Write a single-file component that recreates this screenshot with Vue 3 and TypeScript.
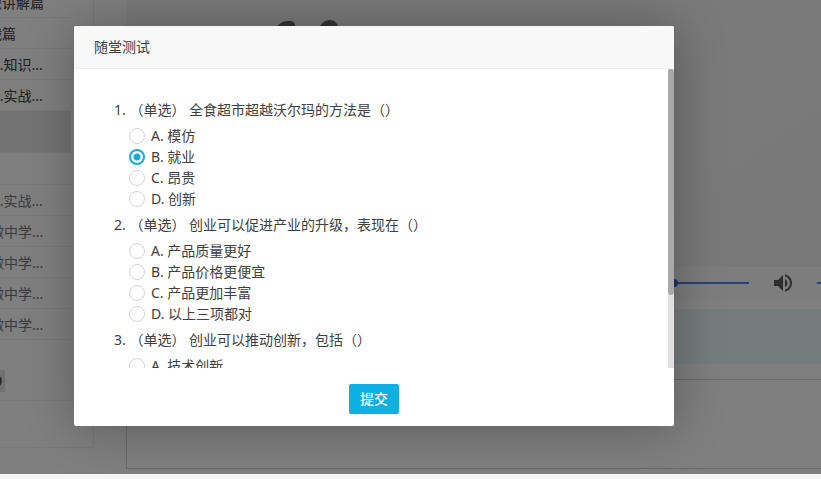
<script setup lang="ts">
import { computed, onMounted, ref } from 'vue'

interface Question {
  title: string
  options: string[]
  answer: string
}

interface Lesson {
  text: string
  kind?: 'active' | 'blank' | 'muted'
}

const lessons: Lesson[] = [
  { text: '知识讲解篇' },
  { text: '实战篇' },
  { text: '第 1.知识...' },
  { text: '第 1.实战...' },
  { text: '', kind: 'active' },
  { text: '', kind: 'blank' },
  { text: '第 2.实战...', kind: 'muted' },
  { text: '11做中学...', kind: 'muted' },
  { text: '12做中学...', kind: 'muted' },
  { text: '13做中学...', kind: 'muted' },
  { text: '14做中学...', kind: 'muted' },
]

const questions = ref<Question[]>([
  { title: '全食超市超越沃尔玛的方法是（）', options: ['模仿', '就业', '昂贵', '创新'], answer: 'B' },
  {
    title: '创业可以促进产业的升级，表现在（）',
    options: ['产品质量更好', '产品价格更便宜', '产品更加丰富', '以上三项都对'],
    answer: '',
  },
  {
    title: '创业可以推动创新，包括（）',
    options: ['技术创新', '产品创新', '管理创新', '以上三项都对'],
    answer: '',
  },
])

const progress = ref(88)
const volume = ref(100)
const letter = (i: number): string => 'ABCD'[i]

const scroller = ref<HTMLElement | null>(null)
const shown = ref(1)
const offset = ref(0)

function measure(): void {
  const el = scroller.value
  if (!el) return
  shown.value = el.clientHeight / el.scrollHeight
  offset.value = el.scrollTop / el.scrollHeight
}

const thumb = computed(() => ({
  height: `${shown.value * 100}%`,
  marginTop: `${offset.value * (scroller.value?.clientHeight ?? 0)}px`,
}))

onMounted(measure)
</script>

<template>
  <div class="page">
    <aside class="sidebar">
      <ul class="lessons">
        <li v-for="(l, i) in lessons" :key="i" :class="['lesson', l.kind]">{{ l.text }}</li>
      </ul>
      <div class="tools"><span class="badge"></span></div>
    </aside>
    <main class="main">
      <div class="video">
        <svg class="figures" width="80" height="40" viewBox="0 0 80 40" aria-hidden="true">
          <path d="M9 13C12 4 17 1 23 1c4 0 6 0 7 4v14H9z" />
          <path d="M53 10C56 3 60 0 65 0s8 4 9 10v12H53z" />
        </svg>
      </div>
      <div class="controls">
        <input v-model="progress" class="slider seek" type="range" min="0" max="100" aria-label="播放进度" />
        <button class="mute" type="button" aria-label="音量">
          <svg width="24" height="24" viewBox="0 0 24 24">
            <path
              d="M3 9v6h4l5 5V4L7 9H3zm13.5 3c0-1.77-1.02-3.29-2.5-4.03v8.05c1.48-.73 2.5-2.25 2.5-4.02zM14 3.23v2.06c2.89.86 5 3.54 5 6.71s-2.11 5.85-5 6.71v2.06c4.01-.91 7-4.49 7-8.77s-2.99-7.86-7-8.77z"
            />
          </svg>
        </button>
        <input v-model="volume" class="slider volume" type="range" min="0" max="100" aria-label="音量大小" />
      </div>
      <div class="notice"></div>
      <div class="panel"></div>
    </main>
    <div class="shade"></div>
  </div>

  <form class="dialog" role="dialog" aria-labelledby="dialog-title" @submit.prevent>
    <h2 id="dialog-title" class="title">随堂测试</h2>
    <div class="body">
      <div ref="scroller" class="questions" @scroll="measure">
        <fieldset v-for="(q, qi) in questions" :key="qi" class="question">
          <legend class="stem">{{ qi + 1 }}. （单选） {{ q.title }}</legend>
          <label v-for="(o, oi) in q.options" :key="oi" class="option">
            <input v-model="q.answer" class="radio" type="radio" :name="`q${qi}`" :value="letter(oi)" />
            <span>{{ letter(oi) }}. {{ o }}</span>
          </label>
        </fieldset>
      </div>
      <div class="rail"><div class="thumb" :style="thumb"></div></div>
    </div>
    <footer class="footer"><button class="submit" type="submit">提交</button></footer>
  </form>
</template>

<style>
body {
  background: #f5f5f5;
  overflow: hidden;
}
</style>

<style scoped>
.page,
.dialog {
  box-sizing: border-box;
  font-family: 'Noto Sans', 'Noto Sans CJK SC', sans-serif;
  font-size: 14px;
  color: #404040;
}
.page {
  position: relative;
  display: flex;
  gap: 32px;
  height: calc(100vh - 5px);
  overflow: hidden;
  background: #fff;
}
.shade {
  position: absolute;
  inset: 0;
  background: rgba(0, 0, 0, 0.5);
}
.sidebar {
  box-sizing: border-box;
  flex: 0 0 94px;
  align-self: flex-start;
  height: 448px;
  padding-right: 22px;
  overflow: hidden;
  border-right: 1px solid #f0f0f0;
  border-bottom: 1px solid #f0f0f0;
}
.lessons {
  margin: -13px 0 0 -26px;
  padding: 0;
  list-style: none;
}
.lesson {
  box-sizing: border-box;
  height: 31px;
  line-height: 31px;
  white-space: nowrap;
  border-bottom: 1px solid #f3f3f3;
}
.lesson.active {
  height: 42px;
  background: #e6e6e6;
}
.lesson.blank {
  height: 32px;
}
.lesson.muted {
  color: #777;
}
.tools {
  box-sizing: border-box;
  height: 61px;
  padding-top: 30px;
  border-bottom: 1px solid #f3f3f3;
}
.badge {
  display: block;
  width: 5px;
  height: 22px;
  background: radial-gradient(ellipse 2px 5px at 0 50%, #555 70%, #e2e2e2);
}
.main {
  flex: 1;
  min-width: 0;
  display: flex;
  flex-direction: column;
}
.video {
  box-sizing: border-box;
  height: 267px;
  padding: 20px 0 0 139px;
  background: linear-gradient(145deg, #f5f5f5 70%, #f0f0f0);
}
.figures {
  display: block;
  fill: #666;
}
.controls {
  display: flex;
  align-items: center;
  gap: 22px;
  height: 32px;
  margin-right: -76px;
  padding-left: 20px;
  background: #fafafa;
}
.slider {
  appearance: none;
  min-width: 0;
  height: 10px;
  margin: 0;
  background: linear-gradient(#4f83f5, #4f83f5) center / 100% 2px no-repeat;
}
.slider::-webkit-slider-thumb {
  appearance: none;
  width: 8px;
  height: 8px;
  border-radius: 50%;
  background: #3c6ad0;
}
.seek {
  flex: 1;
}
.volume {
  flex: 0 0 80px;
}
.mute {
  display: block;
  width: 24px;
  height: 24px;
  padding: 0;
  border: 0;
  background: none;
}
.mute svg {
  display: block;
  fill: #5c5c5c;
}
.notice {
  height: 55px;
  margin: 10px 0 15px;
  background: #eaf9fc;
}
.panel {
  flex: 1;
  margin-bottom: 5px;
  border: 1px solid #d2d2d2;
  border-right: 0;
}
.dialog {
  position: absolute;
  top: 26px;
  left: 74px;
  width: 600px;
  max-width: calc(100% - 74px);
  background: #fff;
  border-radius: 2px;
  box-shadow: 1px 1px 50px rgba(0, 0, 0, 0.3);
}
.title {
  margin: 0;
  padding: 0 20px;
  font-size: 14px;
  font-weight: 400;
  line-height: 42px;
  background: #f8f8f8;
  border-bottom: 1px solid #eee;
  border-radius: 2px 2px 0 0;
}
.body {
  display: flex;
  height: 299px;
}
.questions {
  box-sizing: border-box;
  flex: 1;
  padding: 25px 40px;
  overflow-y: auto;
  scrollbar-width: none;
}
.question {
  margin: 0;
  padding: 0;
  border: 0;
}
.stem {
  padding: 0;
  line-height: 31px;
}
.option {
  display: flex;
  align-items: center;
  gap: 6px;
  margin-left: 15px;
  line-height: 21px;
}
.radio {
  appearance: none;
  box-sizing: border-box;
  width: 16px;
  height: 16px;
  margin: 0;
  border: 1px solid #d4d4d4;
  border-radius: 50%;
  background: #fff;
}
.radio:checked {
  border: 2px solid #12addf;
  background: radial-gradient(circle, #12addf 3px, #fff 4px);
}
.rail {
  flex: 0 0 6px;
  background: #e1e1e1;
}
.thumb {
  border-radius: 3px;
  background: #a8a8a8;
}
.footer {
  display: flex;
  justify-content: center;
  padding: 16px 0 12px;
}
.submit {
  height: 30px;
  padding: 0 11px;
  border: 0;
  border-radius: 2px;
  background: #0cb0e2;
  color: #fff;
  font: 500 14px/30px 'Noto Sans', 'Noto Sans CJK SC', sans-serif;
}
</style>
